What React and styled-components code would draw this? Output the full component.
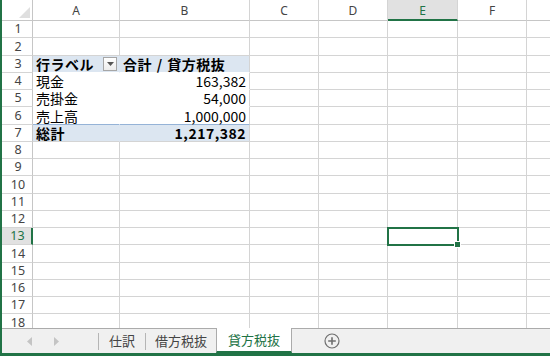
import styled, { createGlobalStyle } from 'styled-components';

const GlobalStyle = createGlobalStyle`
  html, body {
    margin: 0;
    padding: 0;
    background: #ffffff;
    overflow: hidden;
  }
`;

const GREEN = '#217346';
const GRID = '#d4d4d4';
const HEAD_LINE = '#c6c6c6';
const PIVOT_BG = '#dce6f1';
const PIVOT_LINE = '#95b3d7';

const COLS = [
  { key: 'A', width: 87 },
  { key: 'B', width: 130 },
  { key: 'C', width: 69 },
  { key: 'D', width: 69 },
  { key: 'E', width: 70 },
  { key: 'F', width: 69 },
  { key: 'G', width: 80 },
];

const ROW_COUNT = 18;
const SELECTED = { row: 13, col: 'E' };

// pivot table lives in A3:B7
const PIVOT = {
  3: { tone: 'head', a: '行ラベル', b: '合計 / 貸方税抜', bold: true, filter: true },
  4: { tone: 'body', a: '現金', b: '163,382' },
  5: { tone: 'body', a: '売掛金', b: '54,000' },
  6: { tone: 'last', a: '売上高', b: '1,000,000' },
  7: { tone: 'total', a: '総計', b: '1,217,382', bold: true },
};

// rows are 17.25px on average, so snap each edge to the pixel grid
const rowHeight = (i) => Math.round(i * 17.25) - Math.round((i - 1) * 17.25);

const Window = styled.div`
  width: 550px;
  height: 356px;
  box-sizing: border-box;
  border-left: 2px solid ${GREEN};
  border-bottom: 3px solid ${GREEN};
  display: flex;
  flex-direction: column;
  font-family: 'Noto Sans CJK JP', 'Noto Sans', sans-serif;
  color: #000;
  overflow: hidden;
`;

const Sheet = styled.div`
  flex: 1;
  overflow: hidden;
  display: flex;
  flex-direction: column;
`;

const Row = styled.div`
  display: flex;
  flex: none;
  height: ${({ $h }) => $h}px;
`;

const Corner = styled.div`
  width: 31px;
  flex: none;
  box-sizing: border-box;
  border-right: 1px solid ${HEAD_LINE};
  border-bottom: 1px solid ${HEAD_LINE};
  display: flex;
  align-items: flex-end;
  justify-content: flex-end;
  padding: 0 2px 2px 0;
`;

const ColHead = styled.div`
  width: ${({ $w }) => $w}px;
  flex: none;
  box-sizing: border-box;
  border-right: 1px solid ${GRID};
  border-bottom: ${({ $active }) => ($active ? `2px solid ${GREEN}` : `1px solid ${HEAD_LINE}`)};
  background: ${({ $active }) => ($active ? '#e1e1e1' : '#ffffff')};
  color: ${({ $active }) => ($active ? GREEN : '#444444')};
  font-family: 'Noto Sans', 'Liberation Sans', sans-serif;
  font-size: 12px;
  display: flex;
  align-items: center;
  justify-content: center;
  padding-top: ${({ $active }) => ($active ? 1 : 0)}px;
`;

const RowHead = styled.div`
  width: 31px;
  flex: none;
  box-sizing: border-box;
  border-right: ${({ $active }) => ($active ? `2px solid ${GREEN}` : `1px solid ${HEAD_LINE}`)};
  border-bottom: 1px solid ${GRID};
  background: ${({ $active }) => ($active ? '#e1e1e1' : '#ffffff')};
  color: ${({ $active }) => ($active ? GREEN : '#444444')};
  font-family: 'Noto Sans', 'Liberation Sans', sans-serif;
  font-size: 12.5px;
  line-height: 16px;
  display: flex;
  align-items: center;
  justify-content: center;
  padding-left: 2px;
`;

const toneBg = { head: PIVOT_BG, total: PIVOT_BG, body: '#ffffff', last: '#ffffff' };

const Cell = styled.div`
  position: relative;
  width: ${({ $w }) => $w}px;
  flex: none;
  box-sizing: border-box;
  padding: 0 3px;
  display: flex;
  align-items: center;
  justify-content: ${({ $right }) => ($right ? 'flex-end' : 'space-between')};
  font-size: 14px;
  line-height: 16px;
  white-space: nowrap;
  font-weight: ${({ $bold }) => ($bold ? 700 : 400)};
  letter-spacing: ${({ $bold }) => ($bold ? '0.5px' : '0')};
  word-spacing: ${({ $bold }) => ($bold ? '1px' : '0')};
  background: ${({ $tone }) => ($tone ? toneBg[$tone] : '#ffffff')};
  border-right: 1px solid
    ${({ $tone, $inner }) => ($tone && $inner ? toneBg[$tone] : GRID)};
  border-bottom: 1px solid
    ${({ $tone }) =>
      $tone === 'last' ? PIVOT_LINE : $tone === 'head' || $tone === 'body' ? '#ffffff' : GRID};
  ${({ $tone }) => $tone === 'head' && `padding-right: 2px;`}

  ${({ $selected }) =>
    $selected &&
    `
    z-index: 2;
    outline: 2px solid ${GREEN};
    outline-offset: -1px;
    &::after {
      content: '';
      position: absolute;
      right: -4px;
      bottom: -4px;
      width: 5px;
      height: 5px;
      background: ${GREEN};
      border: 1px solid #ffffff;
    }
  `}
`;

const FilterButton = styled.span`
  width: 14px;
  height: 14px;
  box-sizing: border-box;
  border: 1px solid #a6a6a6;
  background: linear-gradient(#ffffff, #ececec);
  display: flex;
  align-items: center;
  justify-content: center;
  flex: none;
`;

const TabBar = styled.div`
  height: 25px;
  flex: none;
  box-sizing: border-box;
  border-top: 1px solid #ababab;
  background: #f0f0f0;
  display: flex;
  align-items: stretch;
  font-size: 13px;
  color: #444444;
`;

const Nav = styled.div`
  width: 96px;
  flex: none;
  display: flex;
  align-items: center;
  gap: 20px;
  padding-left: 25px;
  box-sizing: border-box;
`;

const Divider = styled.span`
  width: 1px;
  align-self: center;
  height: 17px;
  background: #b5b5b5;
  flex: none;
`;

const Tab = styled.div`
  flex: none;
  display: flex;
  align-items: center;
  box-sizing: border-box;
  padding: 0 ${({ $pad }) => $pad}px 1px;
  ${({ $active }) =>
    $active &&
    `
    margin-top: -1px;
    background: #ffffff;
    color: ${GREEN};
    border-left: 1px solid #ababab;
    border-right: 1px solid #ababab;
    border-bottom: 2px solid ${GREEN};
    padding-bottom: 0;
  `}
`;

const AddSheet = styled.div`
  width: 80px;
  flex: none;
  display: flex;
  align-items: center;
  justify-content: center;
`;

function Arrow({ dir }) {
  return (
    <svg width="6" height="9" viewBox="0 0 6 9">
      <polygon
        points={dir === 'left' ? '5,0 5,9 0,4.5' : '1,0 1,9 6,4.5'}
        fill="#c4c4c4"
      />
    </svg>
  );
}

function PlusCircle() {
  return (
    <svg width="16" height="16" viewBox="0 0 16 16">
      <circle cx="8" cy="8" r="7" fill="none" stroke="#6f6f6f" strokeWidth="1.2" />
      <path d="M8 4.2v7.6M4.2 8h7.6" stroke="#6f6f6f" strokeWidth="1.6" />
    </svg>
  );
}

function SheetRow({ n }) {
  const pivot = PIVOT[n];
  const active = n === SELECTED.row;
  return (
    <Row $h={rowHeight(n)}>
      <RowHead $active={active}>{n}</RowHead>
      {COLS.map((c) => {
        const inPivot = pivot && (c.key === 'A' || c.key === 'B');
        const selected = active && c.key === SELECTED.col;
        if (!inPivot) return <Cell key={c.key} $w={c.width} $selected={selected} />;
        const isA = c.key === 'A';
        return (
          <Cell
            key={c.key}
            $w={c.width}
            $tone={pivot.tone}
            $inner={isA}
            $bold={pivot.bold}
            $right={!isA && pivot.tone !== 'head'}
          >
            <span>{isA ? pivot.a : pivot.b}</span>
            {isA && pivot.filter && (
              <FilterButton>
                <svg width="7" height="4" viewBox="0 0 7 4">
                  <polygon points="0,0 7,0 3.5,4" fill="#555" />
                </svg>
              </FilterButton>
            )}
          </Cell>
        );
      })}
    </Row>
  );
}

export default function App() {
  const rows = Array.from({ length: ROW_COUNT }, (_, i) => i + 1);
  return (
    <>
      <GlobalStyle />
      <Window>
        <Sheet>
          <Row $h={21}>
            <Corner>
              <svg width="11" height="11" viewBox="0 0 11 11">
                <polygon points="11,0 11,11 0,11" fill="#dfdfdf" />
              </svg>
            </Corner>
            {COLS.map((c) => (
              <ColHead key={c.key} $w={c.width} $active={c.key === SELECTED.col}>
                {c.key === 'G' ? '' : c.key}
              </ColHead>
            ))}
          </Row>
          {rows.map((n) => (
            <SheetRow key={n} n={n} />
          ))}
        </Sheet>
        <TabBar>
          <Nav>
            <Arrow dir="left" />
            <Arrow dir="right" />
          </Nav>
          <Divider />
          <Tab $pad={10}>仕訳</Tab>
          <Divider />
          <Tab $pad={9}>借方税抜</Tab>
          <Tab $pad={11} $active>貸方税抜</Tab>
          <AddSheet>
            <PlusCircle />
          </AddSheet>
        </TabBar>
      </Window>
    </>
  );
}
